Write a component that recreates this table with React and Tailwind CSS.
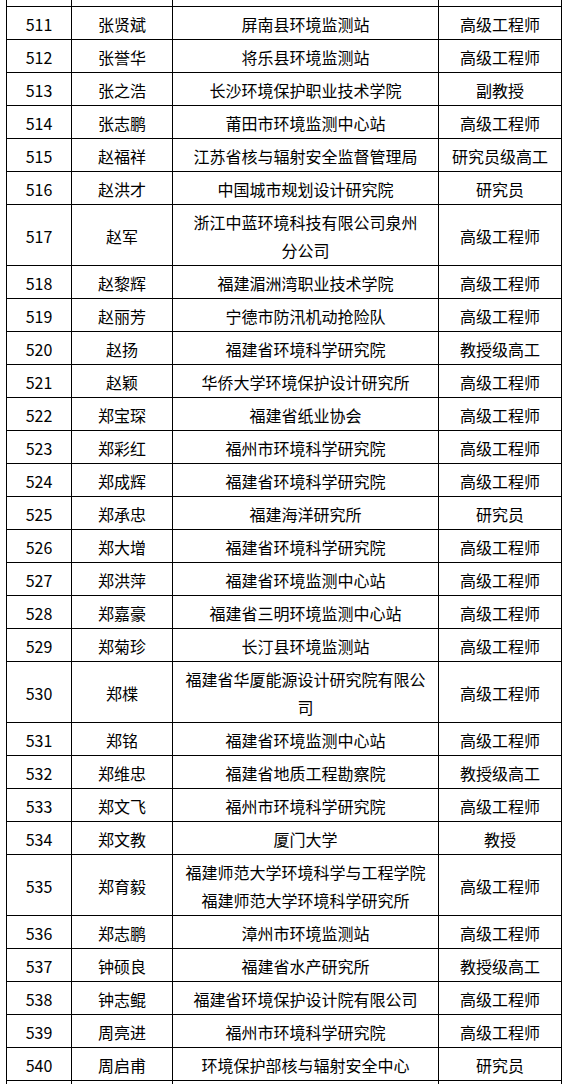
const rows = [
  ['511', '张贤斌', ['屏南县环境监测站'], '高级工程师'],
  ['512', '张誉华', ['将乐县环境监测站'], '高级工程师'],
  ['513', '张之浩', ['长沙环境保护职业技术学院'], '副教授'],
  ['514', '张志鹏', ['莆田市环境监测中心站'], '高级工程师'],
  ['515', '赵福祥', ['江苏省核与辐射安全监督管理局'], '研究员级高工'],
  ['516', '赵洪才', ['中国城市规划设计研究院'], '研究员'],
  ['517', '赵军', ['浙江中蓝环境科技有限公司泉州', '分公司'], '高级工程师'],
  ['518', '赵黎辉', ['福建湄洲湾职业技术学院'], '高级工程师'],
  ['519', '赵丽芳', ['宁德市防汛机动抢险队'], '高级工程师'],
  ['520', '赵扬', ['福建省环境科学研究院'], '教授级高工'],
  ['521', '赵颖', ['华侨大学环境保护设计研究所'], '高级工程师'],
  ['522', '郑宝琛', ['福建省纸业协会'], '高级工程师'],
  ['523', '郑彩红', ['福州市环境科学研究院'], '高级工程师'],
  ['524', '郑成辉', ['福建省环境科学研究院'], '高级工程师'],
  ['525', '郑承忠', ['福建海洋研究所'], '研究员'],
  ['526', '郑大增', ['福建省环境科学研究院'], '高级工程师'],
  ['527', '郑洪萍', ['福建省环境监测中心站'], '高级工程师'],
  ['528', '郑嘉豪', ['福建省三明环境监测中心站'], '高级工程师'],
  ['529', '郑菊珍', ['长汀县环境监测站'], '高级工程师'],
  ['530', '郑楪', ['福建省华厦能源设计研究院有限公', '司'], '高级工程师'],
  ['531', '郑铭', ['福建省环境监测中心站'], '高级工程师'],
  ['532', '郑维忠', ['福建省地质工程勘察院'], '教授级高工'],
  ['533', '郑文飞', ['福州市环境科学研究院'], '高级工程师'],
  ['534', '郑文教', ['厦门大学'], '教授'],
  ['535', '郑育毅', ['福建师范大学环境科学与工程学院', '福建师范大学环境科学研究所'], '高级工程师'],
  ['536', '郑志鹏', ['漳州市环境监测站'], '高级工程师'],
  ['537', '钟硕良', ['福建省水产研究所'], '教授级高工'],
  ['538', '钟志鲲', ['福建省环境保护设计院有限公司'], '高级工程师'],
  ['539', '周亮进', ['福州市环境科学研究院'], '高级工程师'],
  ['540', '周启甫', ['环境保护部核与辐射安全中心'], '研究员'],
];

const cell = 'border border-black px-1 pt-[3px] pb-[1px] text-center align-middle leading-[28px] text-[16px] text-black';

export default function App() {
  return (
    <div
      className="h-[1084px] w-[566px] overflow-hidden bg-white"
      style={{ fontFamily: '"Noto Sans CJK SC", "Noto Sans", sans-serif' }}
    >
      <table className="ml-[6px] mt-[-27px] w-[555px] table-fixed border-collapse">
        <colgroup>
          <col className="w-[65px]" />
          <col className="w-[101px]" />
          <col className="w-[266px]" />
          <col className="w-[123px]" />
        </colgroup>
        <tbody>
          <tr>
            <td className={cell}>&nbsp;</td>
            <td className={cell}></td>
            <td className={cell}></td>
            <td className={cell}></td>
          </tr>
          {rows.map(([no, name, unit, title]) => (
            <tr key={no}>
              <td className={cell}>{no}</td>
              <td className={cell}>{name}</td>
              <td className={cell}>
                {unit.map((line, i) => (
                  <div key={i}>{line}</div>
                ))}
              </td>
              <td className={cell}>{title}</td>
            </tr>
          ))}
          <tr>
            <td className={cell}>&nbsp;</td>
            <td className={cell}></td>
            <td className={cell}></td>
            <td className={cell}></td>
          </tr>
        </tbody>
      </table>
    </div>
  );
}
